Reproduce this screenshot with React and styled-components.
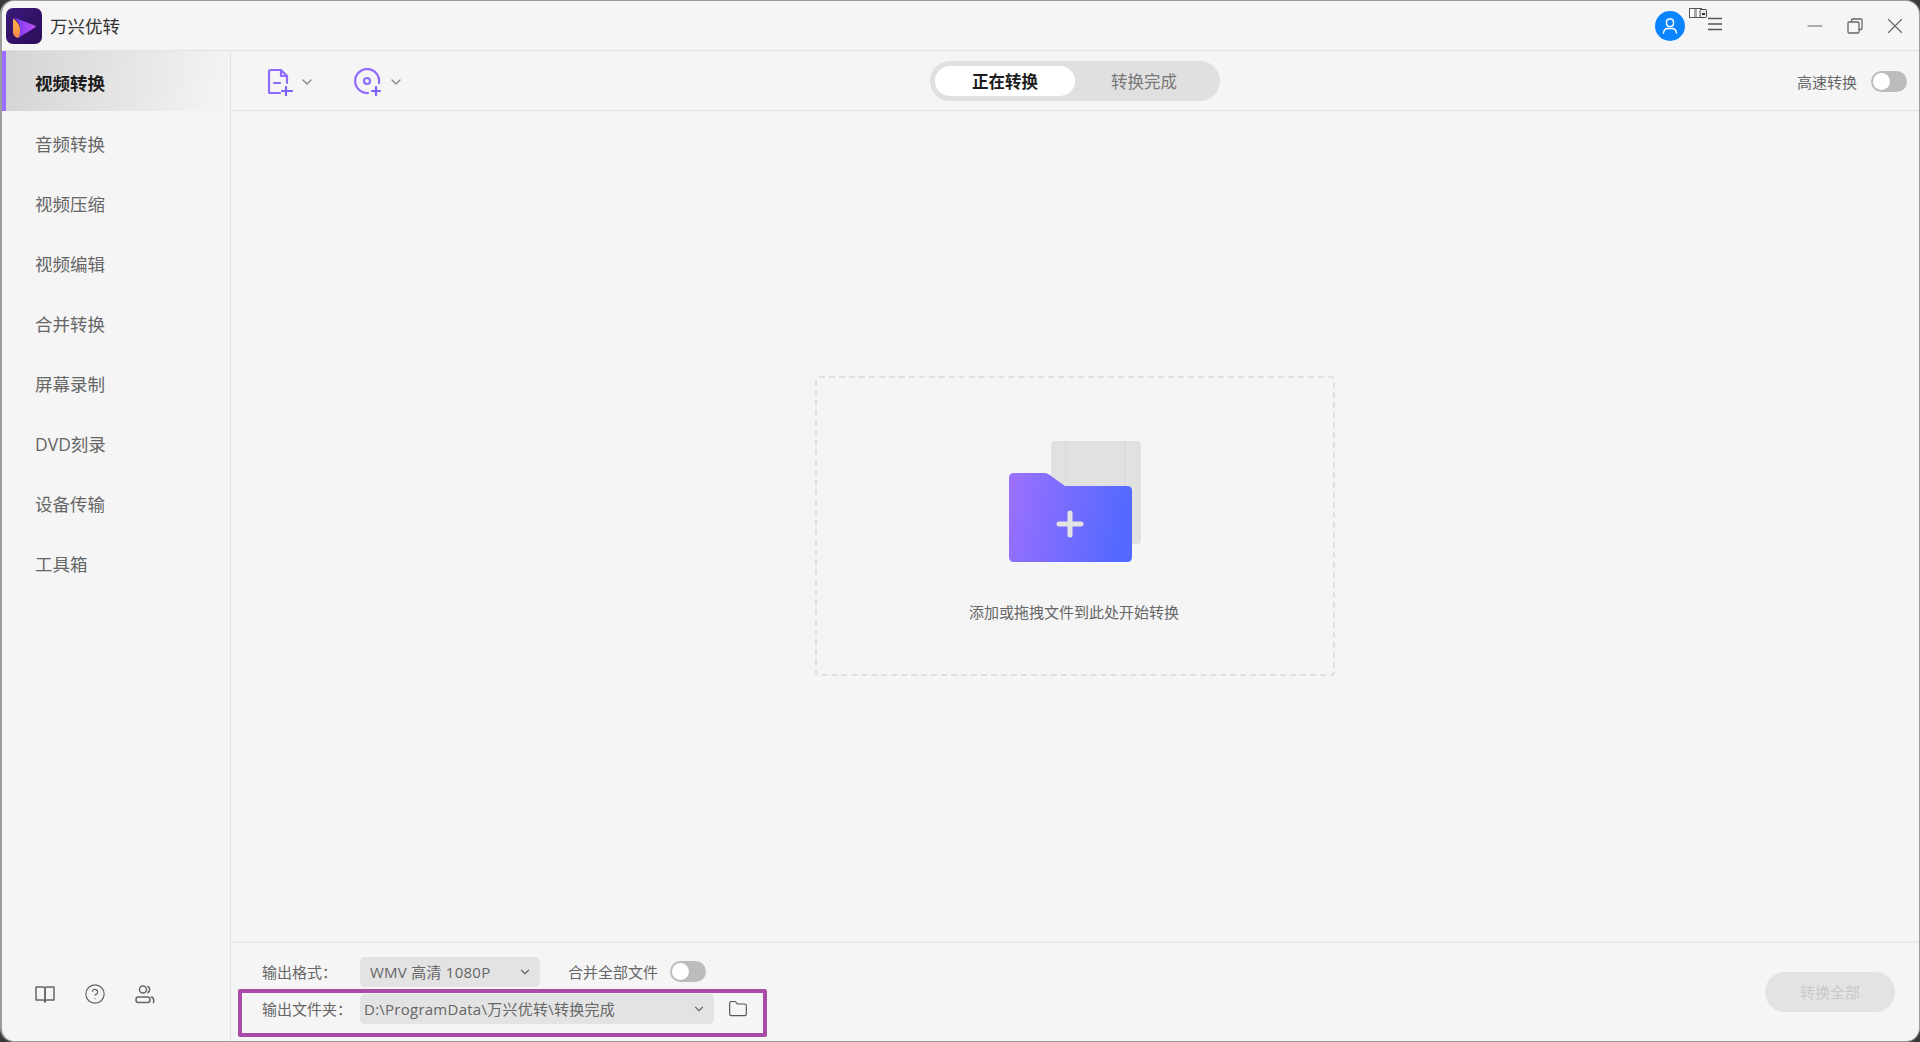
import React from 'react';
import styled, { createGlobalStyle } from 'styled-components';
import { ChevronDown, Folder, CircleHelp, X, Minus } from 'lucide-react';

const GlobalStyle = createGlobalStyle`
  html, body, #root {
    margin: 0;
    width: 100%;
    height: 100%;
    overflow: hidden;
  }
  body {
    background: #3a3a3a;
    font-family: "Open Sans", "Noto Sans CJK SC", sans-serif;
  }
  * {
    box-sizing: border-box;
  }
`;

const Win = styled.div`
  position: relative;
  width: 1920px;
  height: 1042px;
  display: flex;
  flex-direction: column;
  background: #f5f5f5;
  border: 1px solid #9c9c9c;
  border-left-width: 2px;
  border-radius: 14px;
  overflow: hidden;
`;

const TitleBar = styled.header`
  height: 50px;
  flex: none;
  display: flex;
  align-items: center;
  padding: 0 16px 0 4px;
  border-bottom: 1px solid #e2e2e2;
`;

const AppName = styled.span`
  margin-left: 8px;
  font-size: 17.5px;
  color: #333;
`;

const TitleRight = styled.div`
  margin-left: auto;
  display: flex;
  align-items: center;
`;

const Avatar = styled.div`
  width: 30px;
  height: 30px;
  border-radius: 50%;
  background: #0a84ff;
  display: flex;
  align-items: center;
  justify-content: center;
`;

const MenuWrap = styled.div`
  position: relative;
  width: 16px;
  height: 14px;
  margin-left: 22px;
  margin-right: 60px;
  margin-bottom: 10px;
  color: #555;
`;

const Badge = styled.svg`
  position: absolute;
  left: -18px;
  top: -6px;
`;

const WinButton = styled.button`
  width: 16px;
  height: 16px;
  padding: 0;
  margin-left: 24px;
  border: 0;
  background: none;
  color: #666;
  display: flex;
  align-items: center;
  justify-content: center;
  svg {
    flex: none;
  }
`;

const Body = styled.div`
  flex: 1;
  min-height: 0;
  display: flex;
`;

const Sidebar = styled.nav`
  width: 229px;
  flex: none;
  display: flex;
  flex-direction: column;
  border-right: 1px solid #e2e2e2;
`;

const NavItem = styled.div`
  height: 60px;
  flex: none;
  display: flex;
  align-items: center;
  padding-left: 33px;
  font-size: 17.5px;
  color: ${p => (p.$active ? '#1c1c1c' : '#666')};
  font-weight: ${p => (p.$active ? 700 : 400)};
  ${p => p.$active && `
    margin-bottom: 2px;
    border-left: 4px solid #9a6cff;
    padding: 2px 0 0 29px;
    background: linear-gradient(100deg, #d4d4d4 0%, #f5f5f5 100%);
  `}
`;

const SideFoot = styled.div`
  margin-top: auto;
  display: flex;
  align-items: center;
  gap: 29px;
  padding: 0 0 36px 33px;
  color: #666;
`;

const Main = styled.main`
  flex: 1;
  min-width: 0;
  display: flex;
  flex-direction: column;
`;

const Toolbar = styled.div`
  position: relative;
  height: 60px;
  flex: none;
  display: flex;
  align-items: center;
  padding: 2px 12px 0 36px;
  border-bottom: 1px solid #e2e2e2;
`;

const AddButton = styled.div`
  display: flex;
  align-items: center;
  gap: 6px;
  margin-right: 39px;
  color: #888;
`;

const TabPill = styled.div`
  position: absolute;
  left: 699px;
  top: 10px;
  width: 290px;
  height: 40px;
  padding: 5px;
  display: flex;
  border-radius: 20px;
  background: #e0e0e0;
`;

const Tab = styled.div`
  width: 140px;
  display: flex;
  align-items: center;
  justify-content: center;
  border-radius: 15px;
  font-size: 16.5px;
  background: ${p => (p.$active ? '#fff' : 'transparent')};
  color: ${p => (p.$active ? '#1c1c1c' : '#777')};
  font-weight: ${p => (p.$active ? 700 : 400)};
  ${p => !p.$active && 'flex: 1; padding-right: 2px;'}
`;

const SpeedBox = styled.div`
  margin-left: auto;
  display: flex;
  align-items: center;
  gap: 14px;
  font-size: 15px;
  color: #666;
`;

const Toggle = styled.div`
  width: 36px;
  height: 21px;
  padding: 2px;
  border-radius: 11px;
  background: #bcbcbc;
  flex: none;
`;

const Knob = styled.div`
  width: 17px;
  height: 17px;
  border-radius: 50%;
  background: #fff;
`;

const Content = styled.div`
  flex: 1;
  min-height: 0;
  display: flex;
  align-items: center;
  justify-content: center;
`;

const DropZone = styled.div`
  width: 520px;
  height: 300px;
  display: flex;
  flex-direction: column;
  align-items: center;
  border: 2px dashed #e0e0e0;
  border-radius: 4px;
  padding-top: 63px;
`;

const DropText = styled.div`
  margin-top: 37px;
  padding-right: 2px;
  font-size: 15px;
  line-height: 24px;
  color: #666;
`;

const Bottom = styled.div`
  height: 100px;
  flex: none;
  display: flex;
  align-items: center;
  padding: 0 24px 4px 31px;
  border-top: 2px solid #e9e9e9;
`;

const Rows = styled.div`
  display: flex;
  flex-direction: column;
  gap: 7px;
`;

const Row = styled.div`
  display: flex;
  align-items: center;
  height: 30px;
`;

const Label = styled.span`
  width: 98px;
  flex: none;
  font-size: 15px;
  color: #666;
`;

const Select = styled.div`
  width: ${p => p.$width}px;
  height: 30px;
  flex: none;
  display: flex;
  align-items: center;
  justify-content: space-between;
  padding: 0 8px 0 ${p => p.$pad}px;
  border-radius: 5px;
  background: #e3e3e3;
  font-size: 15px;
  letter-spacing: 0.25px;
  color: #666;
`;

const MergeLabel = styled.span`
  margin-left: 28px;
  margin-right: 12px;
  font-size: 15px;
  color: #666;
`;

const FolderButton = styled.div`
  margin-left: 14px;
  display: flex;
  color: #555;
`;

const Highlight = styled.div`
  position: absolute;
  left: 236px;
  top: 988px;
  width: 529px;
  height: 48px;
  border: 4px solid #a84ca8;
  border-radius: 2px;
  pointer-events: none;
`;

const ConvertAll = styled.div`
  margin-left: auto;
  margin-top: 3px;
  width: 130px;
  height: 40px;
  display: flex;
  align-items: center;
  justify-content: center;
  border-radius: 20px;
  background: #e3e3e3;
  font-size: 15px;
  color: #c9c9c9;
`;

const Logo = () => (
  <svg width="36" height="36" viewBox="0 0 36 36">
    <defs>
      <linearGradient id="logoBg" x1="0" y1="0" x2="1" y2="1">
        <stop offset="0" stopColor="#3a1a7a" />
        <stop offset="1" stopColor="#2c0c58" />
      </linearGradient>
      <linearGradient id="logoPlay" x1="0" y1="0" x2="1" y2="0">
        <stop offset="0" stopColor="#6f3cf5" />
        <stop offset="1" stopColor="#c04ff0" />
      </linearGradient>
      <linearGradient id="logoLeft" x1="0" y1="0" x2="0" y2="1">
        <stop offset="0" stopColor="#ffb347" />
        <stop offset="1" stopColor="#f28a4a" />
      </linearGradient>
    </defs>
    <rect width="36" height="36" rx="7" fill="url(#logoBg)" />
    <path d="M8 9.500 L29 17.500 Q30.500 18.500 29 19.500 L12 30 Q18 18 8 9.500Z" fill="url(#logoPlay)" />
    <path d="M7 10.500 Q17.500 17.500 12.500 30 Q8 29.500 7 25Z" fill="url(#logoLeft)" />
  </svg>
);

const FileAddIcon = () => (
  <svg width="26" height="28" viewBox="0 0 26 28" fill="none" stroke="#8f6bff" strokeWidth="2.2" strokeLinecap="round" strokeLinejoin="round">
    <path d="M13 25H3.500Q2 25 2 23.500V3.500Q2 2 3.500 2H14L20 8V15" />
    <path d="M14 2V8H20" />
    <path d="M7 15H13" />
    <path d="M19 19V27M15 23H25" stroke="#7a62ff" />
  </svg>
);

const DiscAddIcon = () => (
  <svg width="28" height="28" viewBox="0 0 28 28" fill="none" stroke="#8f6bff" strokeWidth="2.2" strokeLinecap="round">
    <path d="M14 25A12 12 0 1 1 25 15" />
    <circle cx="13" cy="13" r="3" />
    <path d="M22 19V27M18 23H26" stroke="#7a62ff" />
  </svg>
);

const DropArt = () => (
  <svg width="132" height="122" viewBox="0 0 132 122">
    <defs>
      <linearGradient id="folderFill" x1="0" y1="0" x2="1" y2="0.15">
        <stop offset="0" stopColor="#9d70ff" />
        <stop offset="1" stopColor="#5369ff" />
      </linearGradient>
    </defs>
    <rect x="42" y="0" width="90" height="103" rx="4" fill="#e1e1e1" />
    <path d="M57 0V40M116 0V103" stroke="#d8d8d8" strokeWidth="1" />
    <path d="M0 37Q0 32 5 32H36Q38 32 40 33.500L56 45H118Q123 45 123 50V116Q123 121 118 121H5Q0 121 0 116Z" fill="url(#folderFill)" />
    <path d="M61 72V94M50 83H72" stroke="#e3e3e3" strokeWidth="5" strokeLinecap="round" />
  </svg>
);

const Book = () => (
  <svg width="20" height="18" viewBox="0 0 20 18" fill="none" stroke="#666" strokeWidth="1.500" strokeLinejoin="round">
    <path d="M1 2H8Q10 2 10 4V17Q10 15 8 15H1Z" />
    <path d="M19 2H12Q10 2 10 4V17Q10 15 12 15H19Z" />
  </svg>
);

const People = () => (
  <svg width="20" height="20" viewBox="0 0 20 20" fill="none" stroke="#666" strokeWidth="1.500" strokeLinecap="round">
    <circle cx="8" cy="5.500" r="3.500" />
    <rect x="1" y="13" width="14" height="5.500" rx="2.500" />
    <path d="M13 2.500A3.500 3.500 0 0 1 13 8.500M18.500 18.500Q19.500 14 16.500 13" />
  </svg>
);

const nav = ['音频转换', '视频压缩', '视频编辑', '合并转换', '屏幕录制', 'DVD刻录', '设备传输', '工具箱'];

const App = () => (
  <>
    <GlobalStyle />
    <Win>
      <TitleBar>
        <Logo />
        <AppName>万兴优转</AppName>
        <TitleRight>
          <Avatar>
            <svg width="16" height="16" viewBox="0 0 16 16" fill="none" stroke="#fff" strokeWidth="1.400" strokeLinecap="round">
              <rect x="4.500" y="1" width="7" height="7.500" rx="3" />
              <path d="M1.500 15Q2 10.500 6 10.500H10Q14 10.500 14.500 15" />
            </svg>
          </Avatar>
          <MenuWrap>
            <Badge width="18" height="11" viewBox="0 0 18 11">
              <rect x="0.500" y="0.500" width="12" height="9" fill="#fff" stroke="#555" />
              <rect x="5" y="1" width="3" height="8" fill="#aaa" />
              <rect x="11" y="1.500" width="6.500" height="8" rx="1" fill="#eee" stroke="#444" />
              <rect x="13" y="5" width="3" height="2" fill="#333" />
            </Badge>
            <svg width="16" height="14" viewBox="0 0 16 14" stroke="currentColor" strokeWidth="1.300">
              <path d="M1 1.500H15M1 7H15M1 12.500H15" />
            </svg>
          </MenuWrap>
          <WinButton>
            <Minus size={24} strokeWidth={1.1} />
          </WinButton>
          <WinButton>
            <svg width="16" height="16" viewBox="0 0 16 16" fill="none" stroke="currentColor" strokeWidth="1.300">
              <rect x="1" y="4" width="11" height="11" rx="1" />
              <path d="M4.500 4V2Q4.500 1 5.500 1H14Q15 1 15 2V10.500Q15 11.500 14 11.500H12" />
            </svg>
          </WinButton>
          <WinButton>
            <X size={26} strokeWidth={1} />
          </WinButton>
        </TitleRight>
      </TitleBar>
      <Body>
        <Sidebar>
          <NavItem $active>视频转换</NavItem>
          {nav.map(item => <NavItem key={item}>{item}</NavItem>)}
          <SideFoot>
            <Book />
            <CircleHelp size={22} strokeWidth={1.3} />
            <People />
          </SideFoot>
        </Sidebar>
        <Main>
          <Toolbar>
            <AddButton>
              <FileAddIcon />
              <ChevronDown size={16} strokeWidth={2} />
            </AddButton>
            <AddButton>
              <DiscAddIcon />
              <ChevronDown size={16} strokeWidth={2} />
            </AddButton>
            <TabPill>
              <Tab $active>正在转换</Tab>
              <Tab>转换完成</Tab>
            </TabPill>
            <SpeedBox>
              高速转换
              <Toggle><Knob /></Toggle>
            </SpeedBox>
          </Toolbar>
          <Content>
            <DropZone>
              <DropArt />
              <DropText>添加或拖拽文件到此处开始转换</DropText>
            </DropZone>
          </Content>
          <Bottom>
            <Rows>
              <Row>
                <Label>输出格式：</Label>
                <Select $width={180} $pad={10}>
                  WMV 高清 1080P
                  <ChevronDown size={14} color="#666" />
                </Select>
                <MergeLabel>合并全部文件</MergeLabel>
                <Toggle><Knob /></Toggle>
              </Row>
              <Row>
                <Label>输出文件夹：</Label>
                <Select $width={354} $pad={4}>
                  D:\ProgramData\万兴优转\转换完成
                  <ChevronDown size={14} color="#666" />
                </Select>
                <FolderButton>
                  <Folder size={20} strokeWidth={1.4} />
                </FolderButton>
              </Row>
            </Rows>
            <ConvertAll>转换全部</ConvertAll>
          </Bottom>
        </Main>
      </Body>
      <Highlight />
    </Win>
  </>
);

export default App;
